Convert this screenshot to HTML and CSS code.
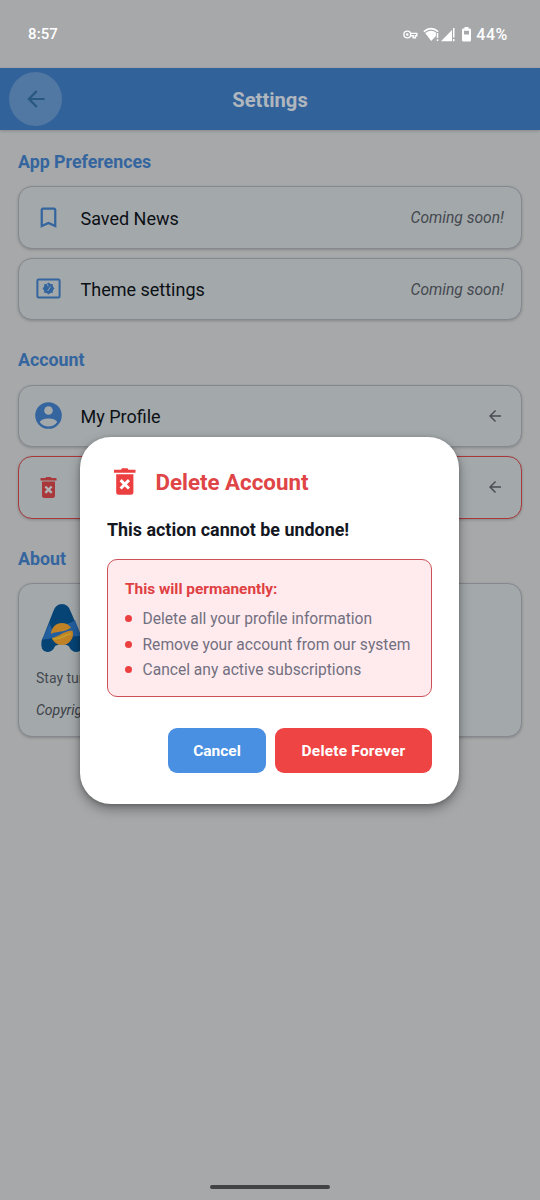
FILE: index.html
```html
<!DOCTYPE html>
<html lang="en">
<head>
<meta charset="utf-8">
<title>Settings</title>
<link rel="stylesheet" href="styles.css">
</head>
<body>
<div class="screen">
  <div class="status">
    <span class="clock">8:57</span>
    <div class="status-icons">
      <svg class="key" width="15" height="9" viewBox="0 0 15 9" fill="none" stroke="#fff" stroke-width="1.4"><circle cx="4.3" cy="4.5" r="3.4"/><circle cx="4.3" cy="4.5" r=".6"/><path d="M7.5 3.4h6.3v2.3h-1.4v2h-2.2v-2H7.5"/></svg>
      <svg class="wifi" width="17" height="15" viewBox="0 0 17 15"><path d="M.8 4.6Q8 -1.2 15.2 4.6" fill="none" stroke="#fff" stroke-width="1.7"/><path d="M2.2 6Q8 1.8 12.9 5.200V9L8.200 14Z" fill="#fff"/><path d="M14.500 6v5M14.500 12.300v1.700" stroke="#fff" stroke-width="1.500"/></svg>
      <svg class="signal" width="14" height="15" viewBox="0 0 14 15" fill="#fff"><path d="M0 14.200 11 3v11.200z"/><path d="M12 1h1.500v9.500H12zM12 12h1.500v2.200H12z"/></svg>
      <svg class="battery" width="9" height="15" viewBox="0 0 9 15"><path fill="#fff" fill-rule="evenodd" d="M2.500 0h4v1.500h1.200q1.300 0 1.300 1.300v10.400q0 1.300-1.300 1.300H1.300Q0 14.500 0 13.200V2.800Q0 1.500 1.300 1.500h1.200zM2 3.700v3.800h5V3.700z"/></svg>
      <span class="percent">44%</span>
    </div>
  </div>
  <header class="header">
    <div class="back"><svg width="26" height="26" viewBox="0 0 24 24" fill="#285780"><path d="M20 11H7.830l5.590-5.590L12 4l-8 8 8 8 1.410-1.410L7.830 13H20z"/></svg></div>
    <h1 class="title">Settings</h1>
  </header>
  <main class="content">
    <h2 class="section">App Preferences</h2>
    <div class="card row">
      <svg class="icon" width="27" height="27" viewBox="0 0 24 24" fill="#35659e"><path d="M17 3H7c-1.100 0-2 .9-2 2v16l7-3 7 3V5c0-1.100-.9-2-2-2zm0 15-5-2.180L7 18V5h10z"/></svg>
      <span class="label">Saved News</span><span class="soon">Coming soon!</span>
    </div>
    <div class="card row">
      <svg class="icon" width="27" height="27" viewBox="0 0 27 27"><rect x="2.400" y="4.400" width="22.200" height="18.200" rx="1.300" fill="none" stroke="#35659e" stroke-width="2"/><path fill="#35659e" d="m13.500 7.600 1.900 1.500 2.400.1.100 2.400 1.500 1.900-1.500 1.900-.1 2.400-2.400.1-1.900 1.500-1.900-1.500-2.400-.1-.1-2.400-1.500-1.900 1.500-1.900.1-2.400 2.400-.1z"/><path d="m12.700 16 2.800-4.300M12.500 9.200l.6 2.200" stroke="#93a2b2" stroke-width="1"/></svg>
      <span class="label">Theme settings</span><span class="soon">Coming soon!</span>
    </div>
    <h2 class="section account">Account</h2>
    <div class="card row">
      <svg class="icon" width="27" height="27" viewBox="0 0 27 27"><defs><clipPath id="disc"><circle cx="13.500" cy="13.500" r="10.900"/></clipPath></defs><circle cx="13.500" cy="13.500" r="13.300" fill="#35659e"/><circle cx="13.500" cy="8.500" r="4.300" fill="#a3a8ab"/><ellipse cx="13.500" cy="21" rx="9" ry="4.600" fill="#a3a8ab" clip-path="url(#disc)"/></svg>
      <span class="label">My Profile</span>
      <svg class="go" width="18" height="18" viewBox="0 0 24 24" fill="#4b4e55"><path d="M20 11H7.830l5.590-5.590L12 4l-8 8 8 8 1.410-1.410L7.830 13H20z"/></svg>
    </div>
    <div class="card row danger">
      <svg class="icon" width="27" height="27" viewBox="0 0 27 27" fill="#a9383a"><path d="M5.500 4h5l.8-1h4.400l.8 1h5v2.500h-16zM7 7.500h13v14q0 2.500-2.500 2.500h-8Q7 24 7 21.500z"/><path d="m10.300 12.500 6.400 6.400m0-6.400-6.400 6.400" stroke="#b3b3b6" stroke-width="2.400"/></svg>
      <span class="label"></span>
      <svg class="go" width="18" height="18" viewBox="0 0 24 24" fill="#4b4e55"><path d="M20 11H7.830l5.590-5.590L12 4l-8 8 8 8 1.410-1.410L7.830 13H20z"/></svg>
    </div>
    <h2 class="section">About</h2>
    <div class="card about">
      <svg class="logo" width="54" height="54" viewBox="0 0 54 54">
        <path fill="#064476" d="M27 3q7.500 0 10.300 7.500L52 40q1.500 10-7.500 11-6.500 0-9.500-6-8-4-16 0-3 6-9.500 6Q1 50 3 40q1-3 2-4L16.700 10.500Q19.500 3 27 3z" transform="translate(4 0) scale(.85 1)"/>
        <path fill="#235f9e" d="M14.500 22 7.500 38.500q9-2 18.500-2.500l20-1-6-16q-5 4-13 5-7 0-10 5z"/>
        <circle cx="27" cy="33" r="11" fill="#c18226"/>
        <path fill="#235f9e" d="M7.500 38.500Q14 32 23 31q10-.5 16.500-7.500l2.500 6q-7-1-14 2.500-8 5.500-20 6.500z"/>
        <path d="M18 38q7-.5 11-3 4-2 7-2" fill="none" stroke="#c0a02b" stroke-width="1.500"/>
      </svg>
      <p class="stay">Stay tuned</p>
      <p class="copy">Copyright</p>
    </div>
  </main>
  <div class="home"></div>

  <div class="dialog" role="dialog">
    <div class="dialog-head">
      <svg width="27" height="27" viewBox="0 0 27 27" fill="#eb3f40"><path d="M0 1.700h7L8 .3h5.500l1 1.400h7v3H0zM2.200 6.200h17.200v18q0 2.500-2.500 2.500H4.700q-2.500 0-2.500-2.500z"/><path d="m6.600 12.100 8.400 8.400m0-8.400-8.400 8.400" stroke="#fff" stroke-width="3"/></svg>
      <h2>Delete Account</h2>
    </div>
    <p class="warning">This action cannot be undone!</p>
    <div class="notice">
      <p class="notice-title">This will permanently:</p>
      <ul>
        <li>Delete all your profile information</li>
        <li>Remove your account from our system</li>
        <li>Cancel any active subscriptions</li>
      </ul>
    </div>
    <div class="actions"><button class="cancel">Cancel</button><button class="delete">Delete Forever</button></div>
  </div>
</div>
</body>
</html>
```
FILE: styles.css
```css
* { box-sizing: border-box; }
body, h1, h2, p, ul { margin: 0; padding: 0; }
body { font-family: Roboto, sans-serif; background: #a6a8aa; }
svg { display: block; flex: none; }
.screen { position: relative; width: 540px; height: 1200px; overflow: hidden; display: flex; flex-direction: column; }
.status { height: 68px; flex: none; padding: 0 32px 0 28px; display: flex; align-items: center; justify-content: space-between; color: #fff; font-size: 15px; font-weight: 500; letter-spacing: .1px; }
.status-icons { display: flex; align-items: center; }
.percent { font-size: 16px; letter-spacing: .6px; }
.key { margin-right: 5px; }
.wifi { margin-right: 1px; }
.signal { margin-right: 7px; }
.battery { margin-right: 5px; }
.header { height: 62px; flex: none; background: #32629a; padding: 2px 9px 0; display: grid; grid-template-columns: 54px 1fr 54px; align-items: center; box-shadow: 0 1px 3px rgba(0,0,0,.2); }
.back { width: 53px; height: 54px; margin-top: -3px; border-radius: 50%; background: #5177a3; display: flex; align-items: center; justify-content: center; }
.title { text-align: center; font-size: 20.200px; line-height: 24px; font-weight: 700; color: #b0b6bd; }
.content { flex: 1; padding: 0 18px; }
.section { font-size: 17.800px; line-height: 24px; font-weight: 700; color: #35659e; margin: 28px 0 12.500px; }
.section:first-child { margin-top: 20px; }
.section.account { margin-bottom: 13.200px; }
.card { border: 1px solid #85888f; border-radius: 14px; background: #a3a8ab; box-shadow: 0 1px 3px rgba(0,0,0,.2); }
.row { height: 62.500px; display: flex; align-items: center; padding: 0 17px 0 16.400px; margin-bottom: 9px; }
.section + .row { margin-top: -.5px; }
.icon { margin-right: 18.100px; }
.label { flex: 1; font-size: 18px; color: #0c1015; padding-top: 2px; }
.soon { font-size: 15.600px; font-style: italic; color: #454950; padding-top: 2px; }
.danger { border-color: #a9383a; }
.about { height: 154px; padding: 17px; margin-top: -.5px; }
.logo { margin: 0 0 0 -1px; }
.stay { font-size: 14px; line-height: 20px; margin-top: 13.500px; color: #454950; }
.copy { font-size: 14px; line-height: 20px; margin-top: 12px; font-style: italic; color: #3b3f46; }
.home { width: 120px; height: 4px; border-radius: 2px; background: #424346; margin: 0 auto 11px; flex: none; }
.dialog { position: absolute; left: 80px; top: 437px; width: 379px; height: 367px; padding: 27px; border-radius: 31px; background: #fff; box-shadow: 0 5px 12px rgba(0,0,0,.35), 0 1px 4px rgba(0,0,0,.2); }
.dialog-head { display: flex; align-items: center; height: 36px; padding-left: 7px; gap: 14.500px; }
.dialog-head svg { margin-top: -1px; }
.dialog-head h2 { font-size: 22.300px; line-height: 28px; font-weight: 700; color: #df4546; }
.warning { margin-top: 18px; font-size: 17.900px; line-height: 24px; font-weight: 700; color: #14171f; }
.notice { height: 138px; margin-top: 17px; padding: 17px; border: 1px solid #cc5157; border-radius: 10px; background: #ffebee; }
.notice-title { font-size: 15.400px; line-height: 24px; font-weight: 700; color: #df4043; margin-bottom: 6px; }
.notice ul { list-style: none; }
.notice li { display: flex; align-items: center; gap: 10.500px; font-size: 15.600px; line-height: 25.500px; color: #727080; white-space: nowrap; }
.notice li::before { content: ""; width: 7px; height: 7px; margin-top: -2px; border-radius: 50%; background: #eb3f40; }
.actions { display: flex; justify-content: flex-end; gap: 9px; margin-top: 31px; }
.actions button { height: 45px; border: 0; border-radius: 9px; color: #fff; font: 700 15.500px Roboto, sans-serif; padding: 0; }
.cancel { width: 98px; background: #4a90e2; }
.actions .delete { width: 157px; background: #ef4444; letter-spacing: .2px; }
```
